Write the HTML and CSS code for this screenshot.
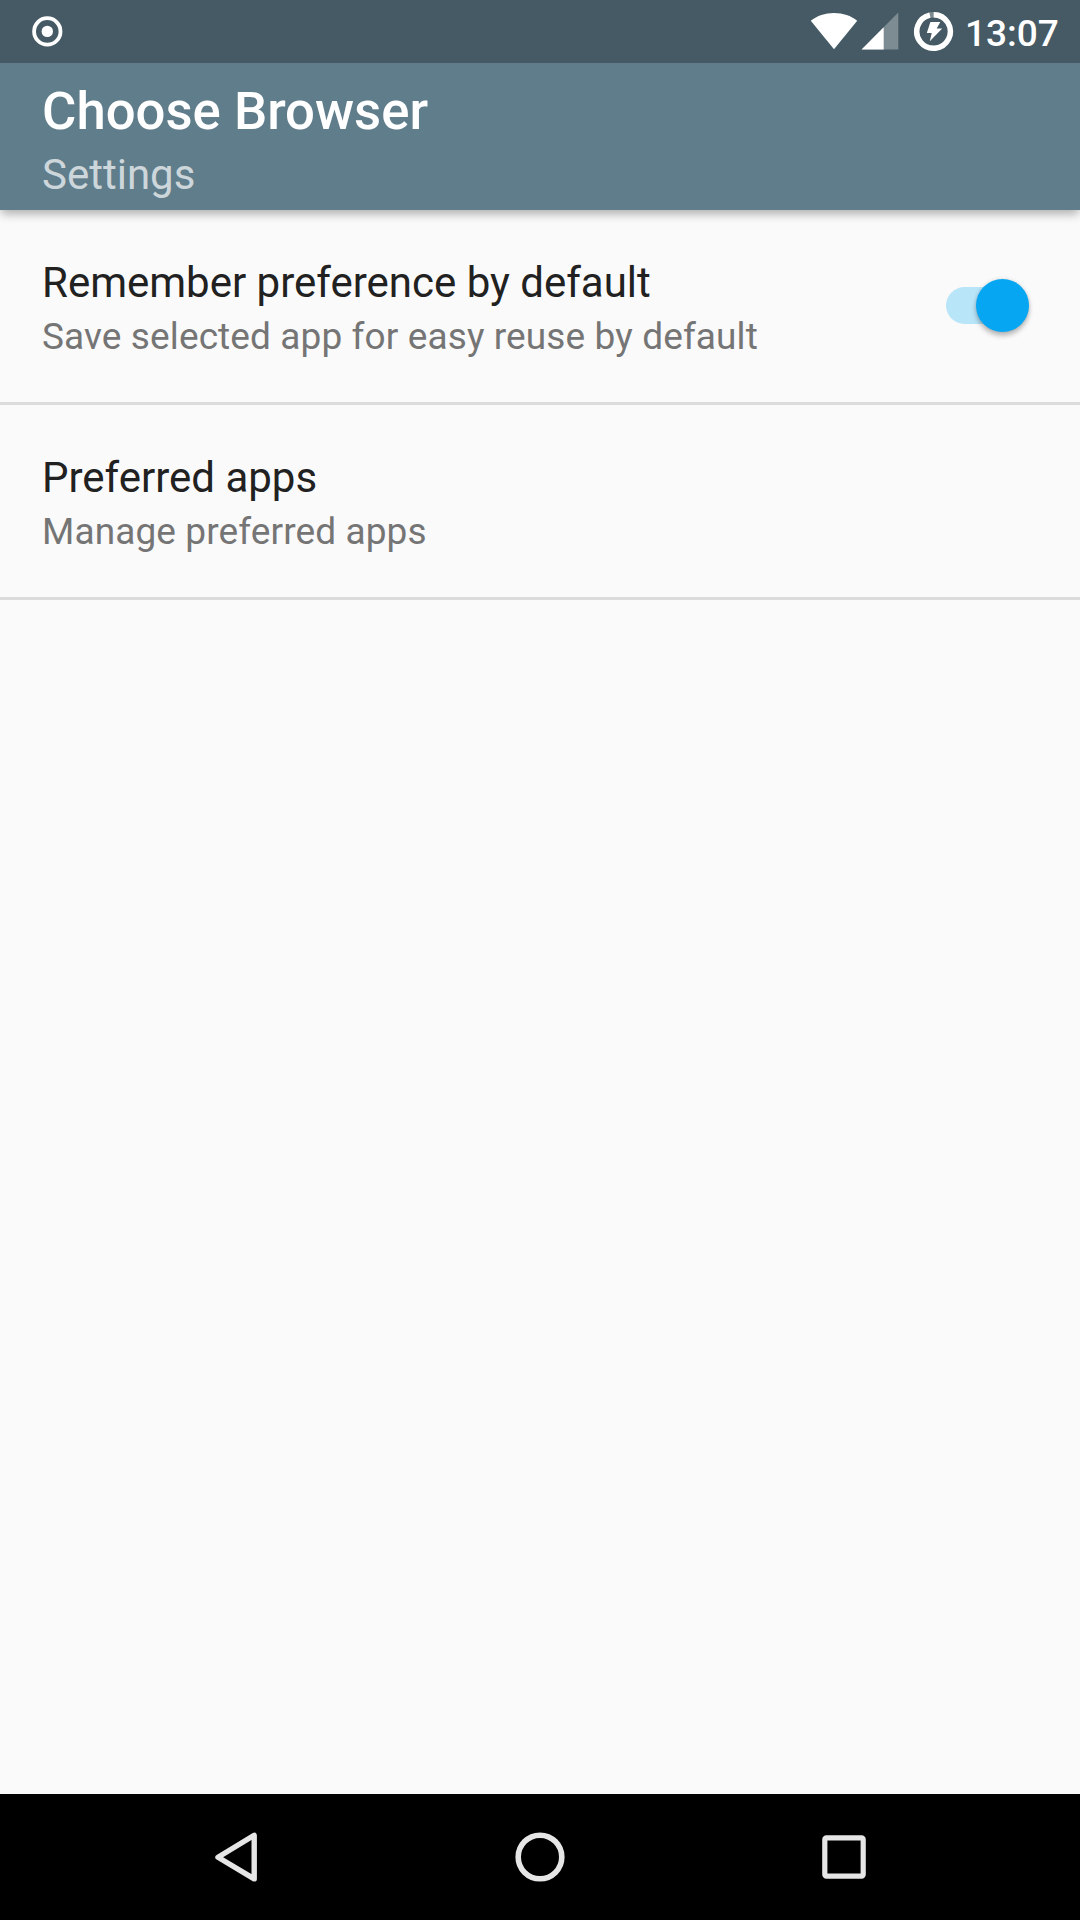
FILE: index.html
```html
<!DOCTYPE html>
<html lang="en">
<head>
<meta charset="utf-8">
<title>Choose Browser</title>
<link rel="stylesheet" href="styles.css">
</head>
<body>
<div class="screen">
  <div class="status-bar">
    <svg width="32" height="63" viewBox="0 0 32 63">
      <circle cx="16.3" cy="31.4" r="13.2" fill="none" stroke="#fff" stroke-width="3.8"/>
      <circle cx="16.3" cy="31.4" r="5.7" fill="#fff"/>
    </svg>
    <svg class="status-icons" width="144" height="63" viewBox="810 0 144 63">
      <path d="M834 49.2 810.8 20.8C817 15.6 825 12.9 834 12.9S851 15.6 857.2 20.8Z" fill="#fff"/>
      <path d="M898.3 12.6V49.4H861.6Z" fill="#fff" fill-opacity=".3"/>
      <path d="M883.7 27.2V49.4H861.6Z" fill="#fff"/>
      <circle cx="933.5" cy="31.5" r="16.8" fill="none" stroke="#fff" stroke-opacity=".3" stroke-width="5.4"/>
      <path d="M933.7 14.7A16.8 16.8 0 1 1 929.9 15.1" fill="none" stroke="#fff" stroke-width="5.4"/>
      <path d="M930.4 22H940.3L936.7 28.6H942.2L929.8 41.2 931.7 33H926.8Z" fill="#fff"/>
    </svg>
    <span class="clock">13:07</span>
  </div>
  <header class="app-bar">
    <h1 class="app-title">Choose Browser</h1>
    <p class="app-subtitle">Settings</p>
  </header>
  <main class="preferences">
    <section class="preference">
      <div class="preference-text">
        <h2 class="preference-title">Remember preference by default</h2>
        <p class="preference-summary">Save selected app for easy reuse by default</p>
      </div>
      <div class="switch" role="switch" aria-checked="true">
        <div class="switch-thumb"></div>
      </div>
    </section>
    <section class="preference">
      <div class="preference-text">
        <h2 class="preference-title">Preferred apps</h2>
        <p class="preference-summary">Manage preferred apps</p>
      </div>
    </section>
  </main>
  <nav class="nav-bar">
    <svg width="60" height="60" viewBox="0 0 60 60"><path d="M48.2 8.3V51.9L12 30.2Z" fill="none" stroke="#e6e6e6" stroke-width="5.4" stroke-linejoin="round"/></svg>
    <svg width="60" height="60" viewBox="0 0 60 60"><circle cx="30" cy="30" r="21.8" fill="none" stroke="#e6e6e6" stroke-width="5.6"/></svg>
    <svg width="60" height="60" viewBox="0 0 60 60"><rect x="10.8" y="10.8" width="38.4" height="38.4" rx="1.6" fill="none" stroke="#e6e6e6" stroke-width="5.2"/></svg>
  </nav>
</div>
</body>
</html>
```

FILE: styles.css
```css
* {
  box-sizing: border-box;
  margin: 0;
  padding: 0;
}

body {
  background: #fafafa;
  font-family: Roboto, sans-serif;
}

.screen {
  display: flex;
  flex-direction: column;
  width: 1080px;
  height: 1920px;
  overflow: hidden;
}

.status-bar {
  position: relative;
  z-index: 2;
  display: flex;
  align-items: center;
  height: 63px;
  padding: 0 0 0 31px;
  background: #455a64;
  color: #fff;
}

.status-icons {
  margin-left: auto;
}

.clock {
  width: 126px;
  padding: 4px 0 0 11px;
  font-size: 37px;
  font-weight: 500;
  line-height: 43px;
}

.app-bar {
  position: relative;
  z-index: 1;
  height: 147px;
  padding: 17px 42px 0;
  background: #607d8b;
  color: #fff;
  box-shadow: 0 5px 9px -1px rgba(0, 0, 0, 0.3);
}

.app-title {
  font-size: 52.7px;
  font-weight: 500;
  line-height: 62px;
}

.app-subtitle {
  margin-top: 8px;
  font-size: 42px;
  line-height: 49px;
  color: rgba(255, 255, 255, 0.7);
}

.preferences {
  flex: 1;
}

.preference {
  display: flex;
  justify-content: space-between;
  height: 195px;
  padding: 48px 51px 0 42px;
  border-bottom: 3px solid #dbdbdb;
}

.preference-title {
  font-size: 42px;
  font-weight: 400;
  line-height: 49px;
  color: #212121;
}

.preference-summary {
  margin-top: 8px;
  font-size: 37px;
  letter-spacing: 0.11px;
  line-height: 43px;
  color: #757575;
}

.switch {
  display: flex;
  align-items: center;
  justify-content: flex-end;
  width: 83px;
  height: 37px;
  margin-top: 29px;
  border-radius: 19px;
  background: #b9e5f9;
}

.switch-thumb {
  flex: none;
  width: 53px;
  height: 53px;
  border-radius: 50%;
  background: #07a6f2;
  box-shadow: 0 4px 5px rgba(0, 0, 0, 0.24), 0 0 4px rgba(0, 0, 0, 0.12);
}

.nav-bar {
  display: flex;
  align-items: center;
  justify-content: center;
  gap: 244px;
  height: 126px;
  background: #000;
}
```
